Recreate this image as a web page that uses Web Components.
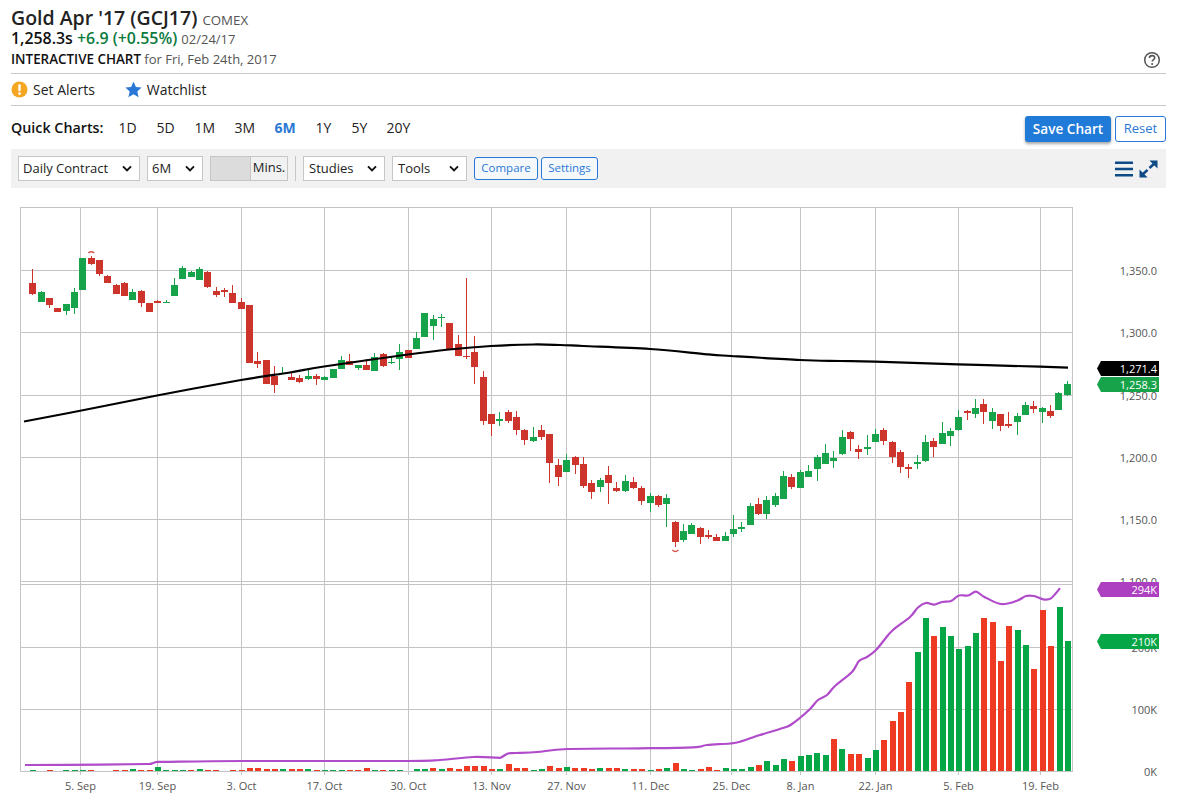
<!DOCTYPE html>
<html lang="en"><head><meta charset="utf-8"><title>Gold Apr '17 (GCJ17) Interactive Chart</title>
<style>
html,body{margin:0;padding:0;background:#fff;font-family:"Open Sans","Noto Sans",sans-serif;color:#111}
</style></head><body>
<gc-page>
  <gc-quote-header slot="head"></gc-quote-header>
  <gc-actions></gc-actions>
  <gc-quick></gc-quick>
  <gc-toolbar></gc-toolbar>
  <gc-chart></gc-chart>
</gc-page>
<script>
const F='"Open Sans","Noto Sans",sans-serif';
function def(name,html,init){
  customElements.define(name,class extends HTMLElement{
    constructor(){super();const r=this.attachShadow({mode:'open'});r.innerHTML=typeof html==='function'?html(this):html;}
    connectedCallback(){if(init&&!this._i){this._i=1;init(this);}}
  });
}
def('gc-page',`<style>:host{display:block;width:1180px;height:805px;overflow:hidden;font-family:${F}}</style><slot name="head"></slot><slot></slot>`);

def('gc-quote-header',`<style>
:host{display:flex;justify-content:space-between;align-items:flex-end;margin:0 14px 0 11px;padding:7px 0 3px;border-bottom:1px solid #c9c9c9;height:63px}
.t{font-size:19.5px;font-weight:600;line-height:21px;color:#222;height:21px;white-space:nowrap}
.t small{font-size:13.3px;font-weight:400;color:#555}
.q{font-size:15.9px;font-weight:600;line-height:20px;height:20px;color:#111;white-space:nowrap}
.q b{font-weight:600;color:#0b7a3e}.q small{font-size:13px;font-weight:400;color:#555}
.c{font-size:13px;line-height:22px;height:22px;color:#555;white-space:nowrap}.c b{font-size:13.4px;font-weight:600;color:#111}
svg{display:block;margin:0 5px 1px 0}
</style><div><div class="t">Gold Apr '17 (GCJ17) <small>COMEX</small></div>
<div class="q">1,258.3s <b>+6.9 (+0.55%)</b> <small>02/24/17</small></div>
<div class="c"><b>INTERACTIVE CHART</b> for Fri, Feb 24th, 2017</div></div>
<svg width="18" height="18" viewBox="0 0 18 18"><circle cx="9" cy="9" r="7.3" fill="none" stroke="#555" stroke-width="1.5"/><path d="M6.4 7.1c0-1.6 1.2-2.5 2.7-2.5s2.6.9 2.6 2.2c0 1.1-.7 1.6-1.4 2.1-.7.5-1 .8-1 1.6" fill="none" stroke="#555" stroke-width="1.6"/><circle cx="9.1" cy="13" r="1" fill="#555"/></svg>`);

def('gc-actions',`<style>
:host{display:flex;align-items:center;gap:30px;margin:0 14px 0 11px;height:31px;border-bottom:1px solid #c9c9c9;font-size:14px;color:#222}
span{display:flex;align-items:center;gap:5px}
</style><span><svg width="17" height="17" viewBox="0 0 17 17"><circle cx="8.5" cy="8.5" r="8" fill="#f5a623"/><rect x="7.3" y="3.3" width="2.4" height="7" rx="1" fill="#fff"/><circle cx="8.5" cy="12.6" r="1.4" fill="#fff"/></svg>Set Alerts</span>
<span><svg width="17" height="17" viewBox="0 0 17 17"><path d="M8.5.6l2.4 5.4 5.7.6-4.3 3.9 1.3 5.8-5.1-3-5.1 3 1.3-5.8L.4 6.6l5.7-.6z" fill="#2a78d6"/></svg>Watchlist</span>`);

def('gc-quick',`<style>
:host{display:flex;align-items:center;margin:0 14px 0 11px;height:43px;font-size:14px;color:#222}
b{font-weight:600;font-size:14.3px;color:#111;margin-right:15px}
a{margin-right:0;color:#222}
a.on{color:#2a78d6;font-weight:700}
.s{margin-left:auto;display:flex;gap:4px;margin-top:2px}
button{font-family:inherit;height:26px;border-radius:3px;padding:0 0 1px;cursor:pointer}
.save{width:86px;background:#1f7ad8;border:0;color:#fff;font-weight:600;font-size:13.6px;box-shadow:0 2px 3px rgba(0,0,0,.35)}
.reset{width:51px;background:#fff;border:1px solid #2a78d6;color:#2a78d6;font-size:13px}
</style><b>Quick Charts:</b>
<a style="width:38px">1D</a><a style="width:38px">5D</a><a style="width:40px">1M</a><a style="width:40px">3M</a><a class="on" style="width:41px">6M</a><a style="width:36px">1Y</a><a style="width:35px">5Y</a><a>20Y</a>
<div class="s"><button class="save">Save Chart</button><button class="reset">Reset</button></div>`);

def('gc-select',h=>`<style>
:host{display:flex;align-items:center;justify-content:space-between;box-sizing:border-box;height:25px;background:#fff;border:1px solid #c6c6c6;padding:0 7px 2px 4px;font-size:13px;color:#222}
svg{display:block;margin-top:2px}
</style><slot></slot><svg width="10" height="7" viewBox="0 0 10 7"><path d="M1 1.3l4 4 4-4" fill="none" stroke="#111" stroke-width="1.9"/></svg>`);

def('gc-toolbar',`<style>
:host{display:flex;align-items:center;gap:7px;height:39px;margin:0 14px 0 11px;padding:0 8px 0 7px;box-sizing:border-box;background:#f1f1f1}
.m{display:flex;box-sizing:border-box;width:78px;height:25px;border:1px solid #c6c6c6;font-size:13px;color:#222}
.m i{width:39px;background:#dcdcdc;border-right:1px solid #c6c6c6}.m span{flex:1;text-align:center;line-height:21px;background:#f1f1f1}
.sep{width:1px;height:25px;background:#c6c6c6}
button{font-family:inherit;box-sizing:border-box;height:23px;background:#f5f8fb;border:1px solid #2a78d6;border-radius:3px;color:#2a78d6;font-size:11.5px;padding:0 0 2px}
.r{margin-left:auto;display:flex;align-items:center;gap:6px}
svg{display:block}
</style>
<gc-select style="width:122px">Daily Contract</gc-select>
<gc-select style="width:56px">6M</gc-select>
<div class="m"><i></i><span>Mins.</span></div>
<div class="sep"></div>
<gc-select style="width:82px;padding-left:5px">Studies</gc-select>
<gc-select style="width:75px;padding-left:5px">Tools</gc-select>
<button style="width:64px">Compare</button><button style="width:57px;margin-left:-4px">Settings</button>
<div class="r"><svg width="18" height="16" viewBox="0 0 19 16"><path d="M0 1.5h19M0 8h19M0 14.5h19" stroke="#0d4a86" stroke-width="2.7"/></svg>
<svg width="19" height="18" viewBox="0 0 20 19"><path d="M11 .5h8.5V9zM.5 10v8.5H9z" fill="#0d4a86"/><path d="M4 15l5-4.6M11 8.5l5-4.5" stroke="#0d4a86" stroke-width="2.7"/></svg></div>`);

const zones=[
 [10,200,`67 207 249 282 285 r|94 273 276 306 306 g|118 294 294 315 324 r|142 324 324 336 336 r|169 312 312 333 345 g|193 264 276 324 342 g|217 174 174 270 270 g|244 168 174 192 195 r|268 180 180 222 228 r|292 225 228 249 249 r|319 252 255 282 282 r|343 246 249 288 288 r|367 267 276 300 300 g|394 270 273 309 321 r|418 309 309 336 336 r|442 300 303 309 309 r|469 300 306 309 309 g|493 234 255 288 288 g|517 198 204 237 237 g|544 213 216 231 231 g|568 201 207 240 240 g|592 213 216 261 264 r|619 261 273 285 291 r|643 264 270 276 291 r|667 255 279 309 309 r|694 294 306 327 327 r|718 315 315 489 489 r|742 456 483 492 504 r|769 480 480 552 552 r|793 498 528 555 579 r`],
 [280,270,`7 291 309 312 312 g|34 309 321 330 330 r|58 315 324 336 339 r|85 297 318 327 330 g|109 312 318 327 345 r|133 318 321 330 330 g|160 297 297 324 324 g|184 258 270 297 297 g|208 252 273 285 285 r|235 285 285 294 300 g|259 267 285 300 300 r|283 249 261 303 303 g|310 249 252 288 291 r|334 261 276 279 282 g|358 222 246 267 300 g|385 240 240 264 264 r|409 186 204 237 237 g|433 129 129 201 201 g|460 135 147 168 210 g|484 132 141 144 171 g|508 159 159 240 240 r|535 195 222 258 258 r|559 24 258 261 267 r|583 198 246 291 342 r|610 303 321 453 465 r|634 432 432 462 498 r|658 426 447 453 468 g|685 420 426 453 459 r|709 423 441 480 495 r|733 477 480 510 525 r|760 471 501 513 516 g|784 465 480 501 510 r`],
 [550,420,`-1 42 42 129 189 r|25 117 135 171 198 r|49 102 120 156 156 g|76 108 111 135 162 r|100 111 132 198 204 r|124 180 189 216 237 r|151 174 180 201 216 g|175 138 165 189 252 r|199 186 204 213 216 r|226 165 183 213 216 g|250 171 186 204 207 r|274 198 204 243 255 r|301 219 228 249 276 g|325 225 228 255 261 r|349 222 234 252 321 g|376 303 306 366 381 r|400 312 333 360 366 g|424 309 315 342 342 g|451 321 324 351 372 r|475 330 345 351 357 r|499 342 351 363 363 r|526 336 348 363 363 g|550 285 327 342 351 g|574 306 321 327 336 g|601 249 258 315 315 g|625 234 252 282 285 r|649 228 240 282 297 g|676 219 228 255 261 g|700 153 168 237 237 g|724 162 171 201 207 r|751 150 156 204 204 g|775 135 153 171 171 g|802 105 111 147 183 g`],
 [820,350,`16 282 309 342 342 g|40 303 324 333 354 g|67 240 261 312 315 g|91 243 246 267 303 r|115 285 297 306 327 r|142 255 291 297 315 g|166 237 252 276 276 g|190 234 240 273 285 r|217 273 276 321 339 r|241 300 306 351 369 r|265 342 351 357 384 r|292 315 336 342 357 g|316 255 276 333 336 g|340 264 273 291 321 r|367 216 249 282 282 g|391 234 243 258 288 g|415 180 201 240 243 g|442 180 183 189 210 r|466 147 174 192 204 g|490 147 162 186 222 r|517 174 186 213 237 g|541 192 192 228 243 r|565 186 222 228 234 r|592 189 198 216 255 g|616 156 165 195 195 g|640 153 168 177 189 r|667 171 174 186 219 g|691 165 183 198 204 r|715 126 129 180 180 g|742 93 102 135 138 g`]
];
const vol=`g3 . r3 . g3 g3 g3 r3 . . r3 r3 g6 r3 r3 g12 g3 g3 g3 r3 g6 r3 r3 . r3 r3 r9 r9 r6 r6 g6 r6 r6 g6 r3 g3 g3 g3 r3 r3 r9 g3 r3 g3 g3 . g6 g6 r9 g6 r9 r6 r15 r15 r15 r6 g6 r21 r9 r9 g3 g6 r15 r9 g12 r9 r9 r6 g9 r9 r9 g6 r6 r6 g3 r6 g9 r24 g6 g3 r6 r12 r3 g9 g6 g6 g12 r18 g30 g18 g36 r30 g45 g48 g54 g48 r96 g66 r51 r51 g39 g63 r93 r150 r177 r267 g357 g459 r405 g432 g405 g366 g375 g414 r459 r447 r330 r435 g423 g378 r306 r483 r375 g492 g390`.split(' ');
const black="24,421.5 84,410 157,395.5 241,380 290,372.5 324,366.5 408,354.5 449,349.5 491,346 533,344.5 560,345 583,346 650,349 707,354.3 731,356 800,360 840,361 875,361.7 958,364.3 1040,366.7 1068,367.7";
const purple="25,765 100,764.6 147,764 151,763.6 157,762 165,761.9 243,761 407,761 440,760 473,757 497,757.7 501,757.5 508,753.5 515,753 537,752 567,749 640,748.3 693,747.3 707,745 730,743.5 740,741.7 760,735 783,728 792,724 809,710 818,700 827,695 835,686 852,672 859,661 867,657 876,650 885,639 893,630 910,617 918,607.5 926,603 934,604.7 942,602 951,601 959,595.5 968,595.5 976,591.7 984,596.7 1001,604 1017,600.7 1026,596 1034,596 1043,599.3 1051,598.3 1060,588.3";
function smooth(str){
  const p=str.split(' ').map(a=>a.split(',').map(Number));
  let d=`M${p[0][0]} ${p[0][1]}`;
  for(let i=0;i<p.length-1;i++){
    const a=p[Math.max(i-1,0)],b=p[i],c=p[i+1],e=p[Math.min(i+2,p.length-1)];
    d+=`C${(b[0]+(c[0]-a[0])/6).toFixed(2)} ${(b[1]+(c[1]-a[1])/6).toFixed(2)} ${(c[0]-(e[0]-b[0])/6).toFixed(2)} ${(c[1]-(e[1]-b[1])/6).toFixed(2)} ${c[0]} ${c[1]}`;
  }
  return d;
}
function chartSvg(){
  const R='#cd352c',G='#17a34a',VR='#ef3a23',VG='#05a646',GL='#c4c4c4';
  let s='';
  const hy=[207.5,270.5,332.5,395.5,457.5,519.5,581.5,584.5,647.5,709.5,771.5];
  const vx=[20.5,80.5,157.5,241.5,324.5,408.5,491.5,566.5,650.5,731.5,800.5,875.5,958.5,1040.5,1072.5];
  hy.forEach(y=>s+=`<path d="M20 ${y}H1073" stroke="${GL}"/>`);
  vx.forEach((x,i)=>s+=`<path d="M${x} 207V${i==0||i==14?772:775}" stroke="${GL}"/>`);
  vol.forEach((v,i)=>{if(v==='.')return;const h=Math.round(+v.slice(1)/3);const X=Math.round(32.33+8.347*i-2.5);
    s+=`<rect x="${X}" y="${771-h}" width="6" height="${h}" fill="${v[0]=='r'?VR:VG}"/>`;});
  s+=`<path d="${smooth(purple)}" fill="none" stroke="#b04bca" stroke-width="2.2" stroke-linejoin="round"/>`;
  zones.forEach(z=>z[2].split('|').forEach(c=>{const p=c.split(' '),X=+p[0]/3+z[0],Y=v=>+v/3+z[1],col=p[5]=='r'?R:G;
    const bx=Math.round(X-3.5);
    s+=`<rect x="${bx+3}" y="${Y(p[1])}" width="1" height="${Y(p[4])-Y(p[1])}" fill="${col}"/>`;
    s+=`<rect x="${bx}" y="${Y(p[2])}" width="7" height="${Y(p[3])-Y(p[2])}" fill="${col}"/>`;}));
  s+=`<path d="M88.3 253Q91.3 250.5 94.3 253M672.3 550Q675.3 553 678.3 550" fill="none" stroke="#d9534d" stroke-width="1.3"/>`;
  s+=`<path d="${smooth(black)}" fill="none" stroke="#000" stroke-width="2.2" stroke-linejoin="round"/>`;
  const lbl=(x,y,t,a,c)=>`<text x="${x}" y="${y}" text-anchor="${a}" fill="${c}" font-size="11">${t}</text>`;
  [['1,350.0',275],['1,300.0',337],['1,250.0',400],['1,200.0',462],['1,150.0',524],['1,100.0',586],['200K',652],['100K',714],['0K',776]].forEach(l=>s+=lbl(1157,l[1],l[0],'end','#555'));
  ['5. Sep','19. Sep','3. Oct','17. Oct','30. Oct','13. Nov','27. Nov','11. Dec','25. Dec','8. Jan','22. Jan','5. Feb','19. Feb'].forEach((t,i)=>s+=lbl(vx[i+1],790,t,'middle','#555'));
  const tag=(y,col,t)=>`<path d="M1097 ${y+7.5}L1101 ${y}H1159V${y+15}H1101Z" fill="${col}"/>`+lbl(1157,y+12,t,'end','#fff');
  s+=tag(361,'#000','1,271.4')+tag(377,'#17a34a','1,258.3')+tag(582,'#ad3fc1','294K')+tag(634,'#05a646','210K');
  return s;
}
def('gc-chart',`<style>:host{display:block;width:1180px;height:617px;overflow:hidden}svg{display:block;font-family:${F}}</style><svg width="1180" height="617" viewBox="0 188 1180 617"></svg>`,
 el=>{el.shadowRoot.querySelector('svg').innerHTML=chartSvg();});
</script>
</body></html>
